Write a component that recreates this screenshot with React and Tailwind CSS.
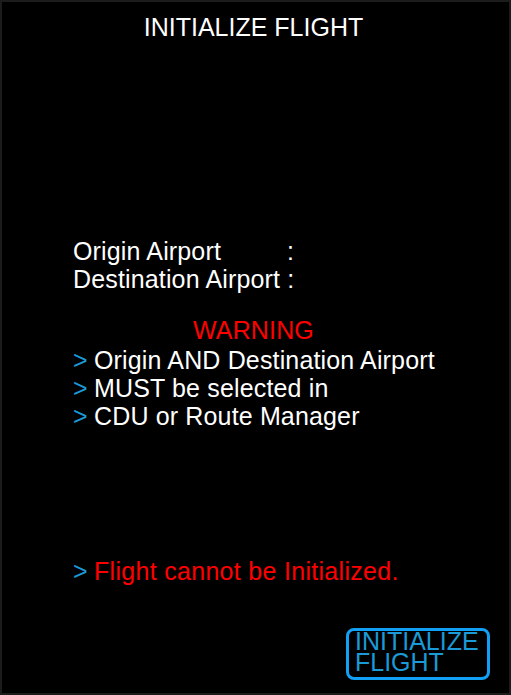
export default function App() {
  const bullets = [
    "Origin AND Destination Airport",
    "MUST be selected in",
    "CDU or Route Manager",
  ];
  return (
    <div
      className="w-[511px] h-[695px] bg-black border-2 border-[#1c1c1c] flex flex-col text-white text-[25px] leading-[28px]"
      style={{ fontFamily: '"Liberation Sans", Arial, sans-serif' }}
    >
      <div className="pt-[11px] pr-[4px] text-center">INITIALIZE FLIGHT</div>

      <div className="pl-[71px] mt-[196px] tracking-[0.15px]">
        <div className="flex">
          <span className="w-[214px]">Origin Airport</span>
          <span>:</span>
        </div>
        <div>Destination Airport :</div>

        <div className="mt-[23px] pl-[120px] text-[#ff0000]">WARNING</div>
        <div className="mt-[2px]">
          {bullets.map((b) => (
            <div key={b} className="flex">
              <span className="w-[21px] text-[#1a9ad6]">&gt;</span>
              <span>{b}</span>
            </div>
          ))}
        </div>

        <div className="mt-[127px] flex">
          <span className="w-[21px] text-[#1a9ad6]">&gt;</span>
          <span className="text-[#ff0000] tracking-[0.3px]">Flight cannot be Initialized.</span>
        </div>
      </div>

      <div className="mt-auto mb-[13px] pr-[19px] flex justify-end">
        <div className="w-[144px] h-[52px] border-[3px] border-[#12a0f5] rounded-[8px] pl-[6px] text-[#1a9ad6] leading-[21px]">
          <div>INITIALIZE</div>
          <div>FLIGHT</div>
        </div>
      </div>
    </div>
  );
}
